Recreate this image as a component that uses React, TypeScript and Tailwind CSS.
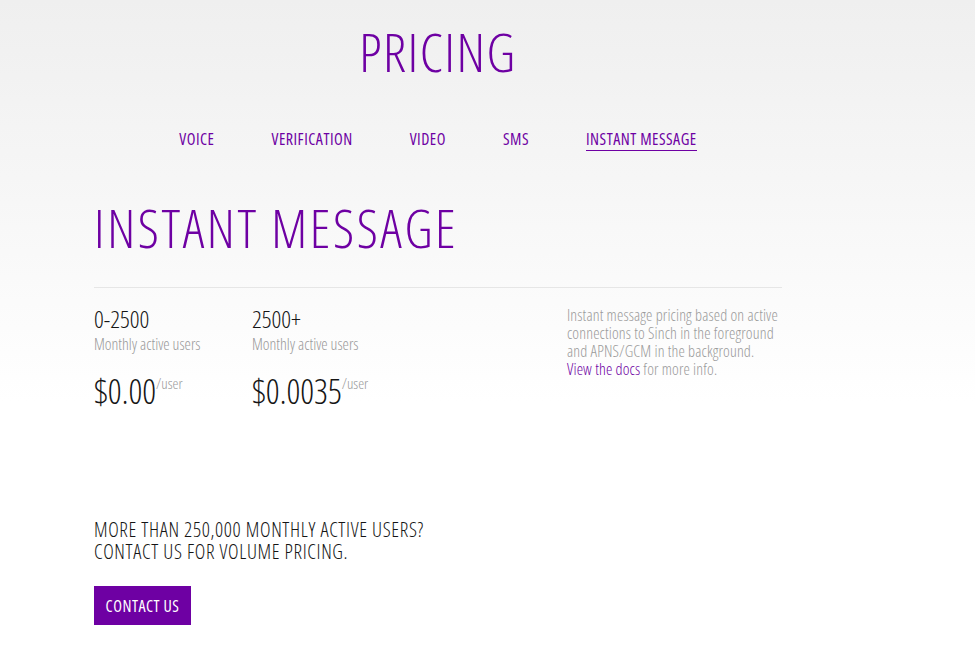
const tabs = ["VOICE", "VERIFICATION", "VIDEO", "SMS", "INSTANT MESSAGE"];

const tiers = [
  { range: "0-2500", price: "$0.00" },
  { range: "2500+", price: "$0.0035" },
];

export default function App() {
  return (
    <div className="min-h-[649px] w-full bg-gradient-to-b from-[#efefef] to-white to-[62%] font-['Open_Sans',sans-serif] font-stretch-[80%]">
      <div className="mx-[94px] w-[688px] pt-[19px]">
        <h1 className="text-center text-[54px] leading-[64px] font-light tracking-[1.5px] text-[#6e00a3]">PRICING</h1>

        <nav className="mt-[46px] flex justify-center gap-[57px]">
          {tabs.map((tab) => (
            <a
              key={tab}
              className={
                "pb-[1px] text-[16px] leading-[20px] font-medium tracking-[0.5px] text-[#6e00a3] " +
                (tab === "INSTANT MESSAGE" ? "border-b-[1.5px] border-[#6e00a3]" : "border-b-[1.5px] border-transparent")
              }
            >
              {tab}
            </a>
          ))}
        </nav>

        <h2 className="mt-[47px] text-[53px] leading-[60px] font-light tracking-[2.6px] text-[#6e00a3]">
          INSTANT MESSAGE
        </h2>

        <div className="mt-[29px] h-px bg-[#e6e6e6]" />

        <div className="mt-[18px] flex">
          {tiers.map((t) => (
            <div key={t.range} className="w-[158px]">
              <div className="text-[24px] leading-[26px] font-light text-[#151515]">{t.range}</div>
              <div className="mt-[3px] text-[16px] leading-[18px] font-light text-[#999]">Monthly active users</div>
              <div className="mt-[18px] flex items-start">
                <span className="text-[34px] leading-[40px] font-light text-[#151515]">{t.price}</span>
                <span className="mt-[3px] text-[15px] leading-[18px] font-light text-[#999]">/user</span>
              </div>
            </div>
          ))}
          <p className="ml-auto w-[215px] text-[16px] leading-[18px] font-light tracking-[0.15px] text-[#9a9a9a]">
            Instant message pricing based on active connections to Sinch in the foreground and APNS/GCM in the
            background. <a className="text-[#6e00a3]">View the docs</a> for more info.
          </p>
        </div>

        <p className="mt-[108px] text-[20px] leading-[22px] font-light tracking-[0.65px] text-[#151515]">
          MORE THAN 250,000 MONTHLY ACTIVE USERS?
          <br />
          CONTACT US FOR VOLUME PRICING.
        </p>

        <button className="mt-[23px] h-[39px] w-[97px] bg-[#6e00a3] text-[16px] tracking-[0.5px] text-white">
          CONTACT US
        </button>
      </div>
    </div>
  );
}
